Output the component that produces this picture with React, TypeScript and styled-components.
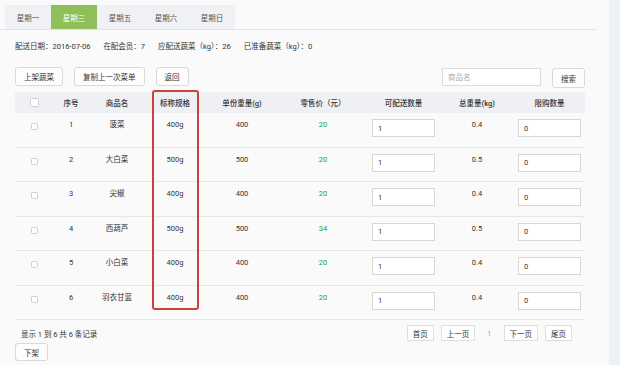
import React from "react";
import styled, { createGlobalStyle } from "styled-components";

const GlobalStyle = createGlobalStyle`
  html, body { margin: 0; padding: 0; background: #fafafa; }
  body {
    font-family: Roboto, "Noto Sans CJK SC", "Noto Sans", sans-serif;
    font-size: 7.5px;
    color: #333;
  }
  * { box-sizing: border-box; }
`;

const Page = styled.div`
  display: flex;
  width: 620px;
  height: 365px;
  overflow: hidden;
`;

const Main = styled.div`
  width: 609px;
  background: #fafafa;
`;

const Side = styled.div`
  flex: 1;
  background: #edf0f4;
`;

const TabHeader = styled.div`
  width: 597px;
  padding: 5px 0 0 5px;
  border-bottom: 1px solid #e3e3e3;
`;

const TabBar = styled.div`
  display: inline-flex;
  background: #eff1f4;
`;

const Tab = styled.div<{ $active?: boolean }>`
  width: 46px;
  height: 24px;
  display: flex;
  align-items: center;
  justify-content: center;
  color: ${(p) => (p.$active ? "#fff" : "#555")};
  background: ${(p) => (p.$active ? "#8fbf58" : "transparent")};
`;

const Content = styled.div`
  padding: 0 24px 0 15px;
`;

const InfoLine = styled.div`
  margin-top: 12px;
  height: 10px;
  line-height: 10px;
  display: flex;
  gap: 13px;
  color: #333;
`;

const Toolbar = styled.div`
  margin-top: 15px;
  height: 21px;
  display: flex;
  justify-content: space-between;
  align-items: flex-start;
`;

const Group = styled.div<{ $offset?: number }>`
  display: flex;
  gap: 11px;
  margin-top: ${(p) => p.$offset ?? 0}px;
`;

const Button = styled.button<{ $h?: number }>`
  height: ${(p) => p.$h ?? 19}px;
  padding: 0 8px;
  font: inherit;
  font-size: 7.5px;
  color: #333;
  background: #fdfdfd;
  border: 1px solid #d9d9d9;
  border-radius: 3px;
  display: flex;
  align-items: center;
  justify-content: center;
`;

const SearchInput = styled.input`
  width: 99px;
  height: 18px;
  padding: 0 5px;
  font: inherit;
  font-size: 7.5px;
  border: 1px solid #dcdcdc;
  background: #fff;
  outline: none;
  &::placeholder { color: #aaa; }
`;

const TableWrap = styled.div`
  position: relative;
  margin-top: 4px;
  width: 570px;
`;

const COLS = "38px 36px 56px 60px 74px 88px 73px 74px 71px";

const HeadRow = styled.div`
  display: grid;
  grid-template-columns: ${COLS};
  height: 21px;
  background: #eef0f3;
  align-items: center;
  justify-items: center;
  font-weight: 500;
  color: #333;
`;

const Row = styled.div`
  display: grid;
  grid-template-columns: ${COLS};
  height: 34.5px;
  border-bottom: 1px solid #e6e6e6;
  justify-items: center;
  align-items: start;
`;

const Cell = styled.div<{ $top?: number; $color?: string }>`
  padding-top: ${(p) => p.$top ?? 7}px;
  line-height: 10px;
  color: ${(p) => p.$color ?? "#333"};
`;

const Check = styled.input.attrs({ type: "checkbox" })<{ $size?: number }>`
  appearance: none;
  -webkit-appearance: none;
  margin: 0;
  width: ${(p) => p.$size ?? 7}px;
  height: ${(p) => p.$size ?? 7}px;
  border: 1px solid #cfcfcf;
  border-radius: 1.5px;
  background: #fff;
  display: block;
`;

const NumInput = styled.input`
  width: 63px;
  height: 18px;
  padding: 0 5px;
  font: inherit;
  font-size: 7.5px;
  color: #333;
  border: 1px solid #d6d6d6;
  background: #fff;
  outline: none;
`;

const Highlight = styled.div`
  position: absolute;
  left: 137px;
  top: -2px;
  width: 47px;
  height: 220px;
  border: 2px solid #c8433b;
  border-radius: 3px;
  pointer-events: none;
`;

const Footer = styled.div`
  margin-top: 5px;
  padding-left: 6px;
  padding-right: 13px;
  height: 16px;
  display: flex;
  justify-content: space-between;
  align-items: center;
  width: 570px;
`;

const Pager = styled.div`
  display: flex;
  align-items: center;
  gap: 7px;
`;

const PageBtn = styled.div`
  height: 16px;
  padding: 0 5px;
  border: 1px solid #dedede;
  background: #fff;
  display: flex;
  align-items: center;
  color: #333;
`;

const Current = styled.span`
  color: #d2a03a;
  padding: 0 5px;
`;

const BottomBar = styled.div`
  margin-top: 2px;
`;

const rows = [
  { id: 1, name: "菠菜", spec: "400g", w: 400, price: 20, total: "0.4" },
  { id: 2, name: "大白菜", spec: "500g", w: 500, price: 20, total: "0.5" },
  { id: 3, name: "尖椒", spec: "400g", w: 400, price: 20, total: "0.4" },
  { id: 4, name: "西葫芦", spec: "500g", w: 500, price: 34, total: "0.5" },
  { id: 5, name: "小白菜", spec: "400g", w: 400, price: 20, total: "0.4" },
  { id: 6, name: "羽衣甘蓝", spec: "400g", w: 400, price: 20, total: "0.4" },
];

const tabs = ["星期一", "星期三", "星期五", "星期六", "星期日"];

export default function App() {
  return (
    <Page>
      <GlobalStyle />
      <Main>
        <TabHeader>
          <TabBar>
            {tabs.map((t) => (
              <Tab key={t} $active={t === "星期三"}>{t}</Tab>
            ))}
          </TabBar>
        </TabHeader>
        <Content>
          <InfoLine>
            <span>配送日期：2016-07-06</span>
            <span>在配会员：7</span>
            <span>应配送蔬菜（kg）：26</span>
            <span>已准备蔬菜（kg）：0</span>
          </InfoLine>
          <Toolbar>
            <Group>
              <Button>上架蔬菜</Button>
              <Button>复制上一次菜单</Button>
              <Button>返回</Button>
            </Group>
            <Group $offset={1}>
              <SearchInput placeholder="商品名" />
              <Button $h={20}>搜索</Button>
            </Group>
          </Toolbar>
          <TableWrap>
            <HeadRow>
              <Check $size={9} />
              <span>序号</span>
              <span>商品名</span>
              <span>标称规格</span>
              <span>单份重量(g)</span>
              <span>零售价（元）</span>
              <span>可配送数量</span>
              <span>总重量(kg)</span>
              <span>限购数量</span>
            </HeadRow>
            {rows.map((r) => (
              <Row key={r.id}>
                <Cell $top={10}><Check /></Cell>
                <Cell>{r.id}</Cell>
                <Cell>{r.name}</Cell>
                <Cell>{r.spec}</Cell>
                <Cell>{r.w}</Cell>
                <Cell $color="#2f9a37">{r.price}</Cell>
                <Cell $top={6}><NumInput defaultValue="1" /></Cell>
                <Cell>{r.total}</Cell>
                <Cell $top={6}><NumInput defaultValue="0" /></Cell>
              </Row>
            ))}
            <Highlight />
          </TableWrap>
          <Footer>
            <span>显示 1 到 6 共 6 条记录</span>
            <Pager>
              <PageBtn>首页</PageBtn>
              <PageBtn>上一页</PageBtn>
              <Current>1</Current>
              <PageBtn>下一页</PageBtn>
              <PageBtn>尾页</PageBtn>
            </Pager>
          </Footer>
          <BottomBar>
            <Button $h={18}>下架</Button>
          </BottomBar>
        </Content>
      </Main>
      <Side />
    </Page>
  );
}
